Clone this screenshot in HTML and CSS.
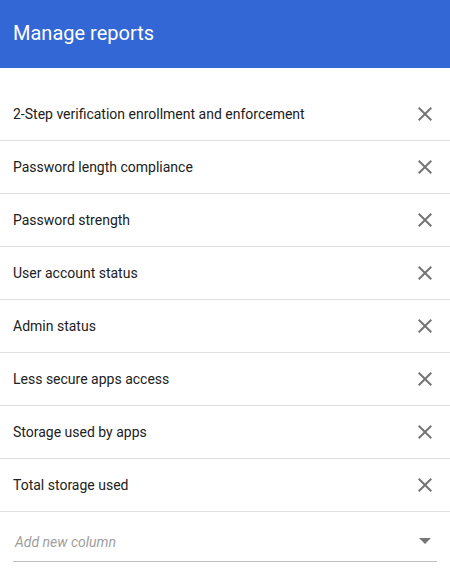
FILE: index.html
```html
<!DOCTYPE html>
<html>
<head>
<meta charset="utf-8">
<link rel="stylesheet" href="styles.css">
</head>
<body>
<header class="bar"><h1 class="title">Manage reports</h1></header>
<ul class="list">
  <li class="row"><span class="label">2-Step verification enrollment and enforcement</span><svg class="close" viewBox="0 0 24 24"><path d="M19 6.41L17.59 5 12 10.59 6.41 5 5 6.41 10.59 12 5 17.59 6.41 19 12 13.41 17.59 19 19 17.59 13.41 12z"/></svg></li>
  <li class="row"><span class="label">Password length compliance</span><svg class="close" viewBox="0 0 24 24"><path d="M19 6.41L17.59 5 12 10.59 6.41 5 5 6.41 10.59 12 5 17.59 6.41 19 12 13.41 17.59 19 19 17.59 13.41 12z"/></svg></li>
  <li class="row"><span class="label">Password strength</span><svg class="close" viewBox="0 0 24 24"><path d="M19 6.41L17.59 5 12 10.59 6.41 5 5 6.41 10.59 12 5 17.59 6.41 19 12 13.41 17.59 19 19 17.59 13.41 12z"/></svg></li>
  <li class="row"><span class="label">User account status</span><svg class="close" viewBox="0 0 24 24"><path d="M19 6.41L17.59 5 12 10.59 6.41 5 5 6.41 10.59 12 5 17.59 6.41 19 12 13.41 17.59 19 19 17.59 13.41 12z"/></svg></li>
  <li class="row"><span class="label">Admin status</span><svg class="close" viewBox="0 0 24 24"><path d="M19 6.41L17.59 5 12 10.59 6.41 5 5 6.41 10.59 12 5 17.59 6.41 19 12 13.41 17.59 19 19 17.59 13.41 12z"/></svg></li>
  <li class="row"><span class="label">Less secure apps access</span><svg class="close" viewBox="0 0 24 24"><path d="M19 6.41L17.59 5 12 10.59 6.41 5 5 6.41 10.59 12 5 17.59 6.41 19 12 13.41 17.59 19 19 17.59 13.41 12z"/></svg></li>
  <li class="row"><span class="label">Storage used by apps</span><svg class="close" viewBox="0 0 24 24"><path d="M19 6.41L17.59 5 12 10.59 6.41 5 5 6.41 10.59 12 5 17.59 6.41 19 12 13.41 17.59 19 19 17.59 13.41 12z"/></svg></li>
  <li class="row"><span class="label">Total storage used</span><svg class="close" viewBox="0 0 24 24"><path d="M19 6.41L17.59 5 12 10.59 6.41 5 5 6.41 10.59 12 5 17.59 6.41 19 12 13.41 17.59 19 19 17.59 13.41 12z"/></svg></li>
</ul>
<div class="select">
  <span class="placeholder">Add new column</span>
  <svg class="caret" viewBox="0 0 12 6"><path d="M0 0h12L6 6z"/></svg>
</div>
</body>
</html>
```
FILE: styles.css
```css
html, body {
  margin: 0;
  padding: 0;
  background: #fff;
  font-family: Roboto, "Liberation Sans", sans-serif;
}
.bar {
  height: 68px;
  background: #3367d6;
  display: flex;
  align-items: center;
  padding: 0 13px;
}
.title {
  margin: 0;
  font-size: 20px;
  font-weight: 400;
  color: #fff;
  line-height: 24px;
  position: relative;
  top: -1px;
}
.list {
  list-style: none;
  margin: 20px 0 0;
  padding: 0;
}
.row {
  height: 52px;
  border-bottom: 1px solid #e0e0e0;
  display: flex;
  align-items: center;
  justify-content: space-between;
  padding: 0 13px;
}
.label {
  font-size: 14px;
  color: #212121;
  line-height: 20px;
}
.close {
  width: 24px;
  height: 24px;
  fill: #757575;
}
.select {
  margin: 0 13px;
  height: 41px;
  border-bottom: 1px solid #bdbdbd;
  display: flex;
  align-items: center;
  justify-content: space-between;
  padding: 8px 6px 0 2px;
}
.placeholder {
  font-size: 14px;
  font-style: italic;
  color: #9e9e9e;
  line-height: 20px;
  position: relative;
  top: 1px;
}
.caret {
  width: 12px;
  height: 6px;
  fill: #757575;
}
```
